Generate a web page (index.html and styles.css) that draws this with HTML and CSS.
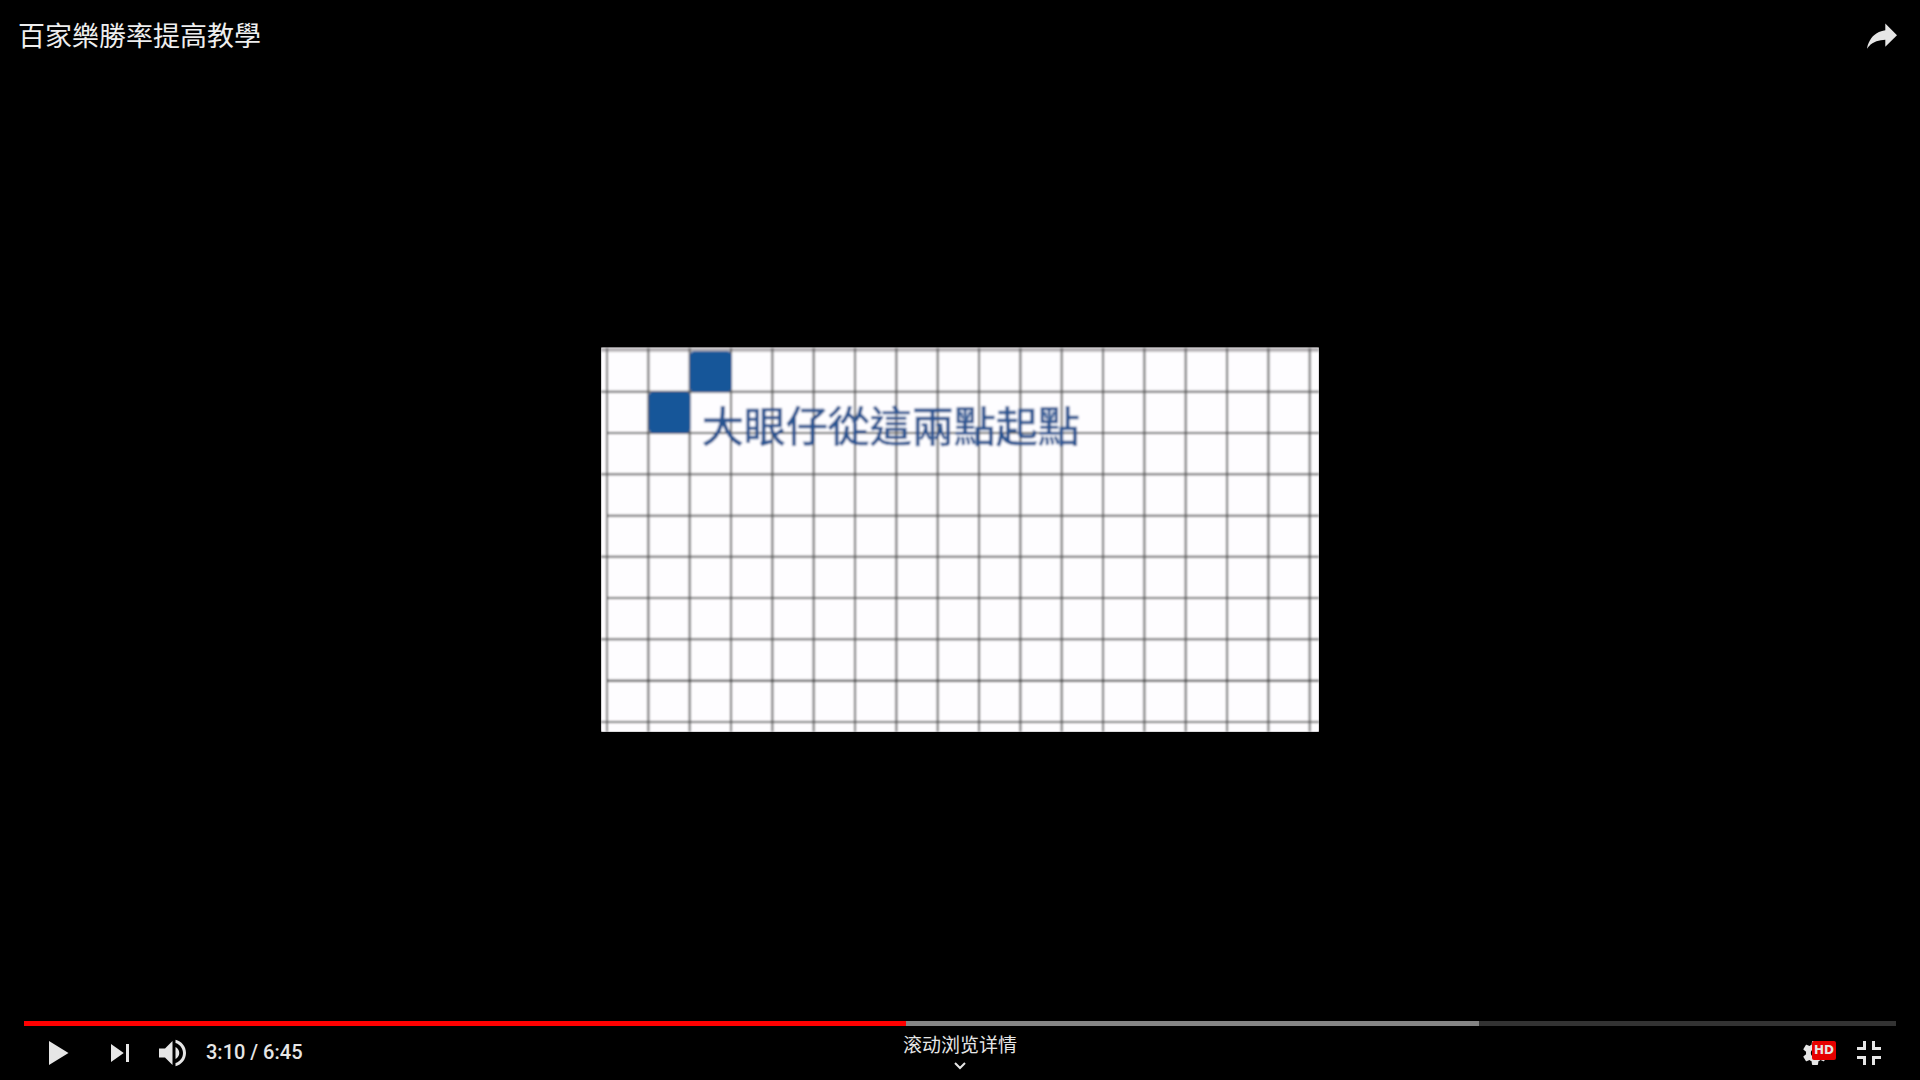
FILE: index.html
```html
<!DOCTYPE html>
<html lang="zh-Hant">
<head>
<meta charset="utf-8">
<meta name="viewport" content="width=device-width, initial-scale=1">
<title>百家樂勝率提高教學</title>
<link rel="stylesheet" href="styles.css">
</head>
<body>
<main class="player">
  <section class="stage">
    <svg class="board" viewBox="0 0 2154 1158" role="img" aria-label="大眼仔從這兩點起點">
      <defs>
        <filter id="soft" x="0" y="0" width="1" height="1">
          <feGaussianBlur stdDeviation="3"/>
        </filter>
      </defs>
      <rect class="paper" x="1" y="2" width="2152" height="1152"/>
      <g filter="url(#soft)">
        <rect class="paper" x="1" y="2" width="2152" height="1152"/>
        <path class="edge" d="M0 8H2154"/>
        <path class="line" d="M18 2V1154M142 2V1154M266 2V1154M390 2V1154M514 2V1154M638 2V1154M762 2V1154M886 2V1154M1010 2V1154M1134 2V1154M1258 2V1154M1382 2V1154M1506 2V1154M1630 2V1154M1754 2V1154M1878 2V1154M2002 2V1154M2126 2V1154"/>
        <path class="line" d="M0 134H2154M18 258H2154M0 382H2154M18 506H2154M0 629H2154M18 753H2154M0 877H2154M0 1125H2154"/>
        <path class="line line-strong" d="M18 1001H2154"/>
        <rect class="mark" x="266" y="13" width="126" height="122" rx="14"/>
        <rect class="mark" x="143" y="134" width="125" height="124" rx="14"/>
        <text class="caption" x="302" y="284">大眼仔從這兩點起點</text>
      </g>
    </svg>
  </section>

  <header class="top-bar">
    <h1 class="title">百家樂勝率提高教學</h1>
    <button class="icon-button" type="button" aria-label="分享">
      <svg class="icon" viewBox="0 0 36 36"><path d="m20.2 14.19 0-4.45 7.79 7.79-7.79 7.56 0-4.56C16.27 20.69 12.1 21.81 9.34 24.76 8.8 25.13 7.6 27.29 8.12 25.65 9.08 21.32 11.8 17.18 15.98 15.38c1.33-.6 2.76-.98 4.21-1.19z"/></svg>
    </button>
  </header>

  <footer class="controls">
    <input class="progress" type="range" min="0" max="405" value="190" aria-label="播放进度">
    <div class="control-row">
      <div class="group">
        <button class="icon-button play" type="button" aria-label="播放">
          <svg class="icon" viewBox="0 0 36 36"><path d="M12 26 25 18 12 10z"/></svg>
        </button>
        <button class="icon-button" type="button" aria-label="下一个">
          <svg class="icon" viewBox="0 0 36 36"><path d="M12 24 20.5 18 12 12zM22 12v12h2V12z"/></svg>
        </button>
        <button class="icon-button" type="button" aria-label="静音">
          <svg class="icon" viewBox="0 0 36 36"><path d="M8 21h4l5 5V10l-5 5H8zM19 14v8c1.48-.68 2.5-2.23 2.5-4s-1.02-3.26-2.5-4zM19 11.29c2.89.86 5 3.54 5 6.71s-2.11 5.85-5 6.71v2.06c4.01-.91 7-4.49 7-8.77s-2.99-7.86-7-8.77z"/></svg>
        </button>
        <span class="time">3:10 / 6:45</span>
      </div>
      <button class="details" type="button" lang="zh-Hans">
        <span>滚动浏览详情</span>
        <svg class="chevron" viewBox="0 0 12 8"><path d="M1 1 6 6 11 1"/></svg>
      </button>
      <div class="group group-end">
        <button class="icon-button settings" type="button" aria-label="设置">
          <svg class="icon" viewBox="0 0 36 36"><path fill-rule="evenodd" d="M23.94 18.78c.03-.25.05-.51.05-.78s-.02-.52-.05-.78l1.68-1.32c.15-.12.19-.33.09-.51l-1.6-2.76c-.09-.17-.31-.24-.48-.17l-1.99.8c-.41-.32-.86-.58-1.35-.78l-.3-2.12c-.02-.19-.19-.33-.39-.33h-3.2c-.2 0-.36.14-.39.33l-.3 2.12c-.48.2-.93.47-1.35.78l-1.99-.8c-.18-.07-.39 0-.48.17l-1.6 2.76c-.1.17-.05.39.09.51l1.68 1.32c-.03.25-.05.52-.05.78s.02.52.05.78l-1.68 1.32c-.15.12-.19.33-.09.51l1.6 2.76c.09.17.31.24.48.17l1.99-.8c.41.32.86.58 1.35.78l.3 2.12c.02.19.19.33.39.33h3.2c.2 0 .36-.14.39-.33l.3-2.12c.48-.2.93-.47 1.35-.78l1.99.8c.18.07.39 0 .48-.17l1.6-2.76c.09-.17.05-.39-.09-.51zM18 20.8c-1.54 0-2.8-1.26-2.8-2.8s1.26-2.8 2.8-2.8 2.8 1.26 2.8 2.8-1.26 2.8-2.8 2.8z"/></svg>
          <span class="badge">HD</span>
        </button>
        <button class="icon-button" type="button" aria-label="退出全屏">
          <svg class="icon" viewBox="0 0 36 36"><path d="M14 14h-4v2h6v-6h-2zM22 14v-4h-2v6h6v-2zM20 26h2v-4h4v-2h-6zM10 22h4v4h2v-6h-6z"/></svg>
        </button>
      </div>
    </div>
  </footer>
</main>
</body>
</html>
```
FILE: styles.css
```css
* {
  box-sizing: border-box;
}

body {
  margin: 0;
  background: #000;
  color: #e6e6e6;
  font-family: Roboto, "Noto Sans CJK TC", sans-serif;
}

/* Stage, title bar and controls share one cell, so the bars lie over the video. */
.player {
  display: grid;
  grid-template: minmax(100vh, auto) / 1fr;
}

.stage,
.top-bar,
.controls {
  grid-area: 1 / 1;
}

.stage {
  display: grid;
  place-items: center;
}

.board {
  width: 37.4%;
}

.paper {
  fill: #fefdff;
}

.line {
  fill: none;
  stroke: #5c5c5c;
  stroke-width: 6;
}

.line-strong {
  stroke: #333;
}

.edge {
  stroke: #b4b0b4;
  stroke-width: 12;
}

.mark {
  fill: #165699;
}

.caption {
  fill: #285390;
  stroke: #285390;
  stroke-width: 2;
  font-family: "Noto Sans CJK TC", sans-serif;
  font-size: 126px;
}

.top-bar {
  align-self: start;
  display: flex;
  justify-content: space-between;
  align-items: center;
  padding: 9px 11px 0 18px;
}

.title {
  margin: 0;
  color: #eee;
  font-size: 27px;
  font-weight: 400;
  line-height: 56px;
}

button {
  padding: 0;
  border: 0;
  background: none;
  color: inherit;
  font: inherit;
  cursor: pointer;
}

.icon-button {
  display: block;
  width: 54px;
  height: 54px;
}

.top-bar .icon-button {
  align-self: flex-start;
}

.icon {
  display: block;
  width: 100%;
  height: 100%;
  fill: #e6e6e6;
}

.controls {
  align-self: end;
  padding: 0 24px;
}

.progress {
  display: block;
  width: 100%;
  height: 5px;
  margin: 0;
  appearance: none;
  background: linear-gradient(to right, #f00 47.1%, #858585 47.1% 77.7%, #333 77.7%);
  cursor: pointer;
}

.progress::-webkit-slider-thumb {
  appearance: none;
  width: 1px;
  height: 5px;
  background: transparent;
}

.control-row {
  display: grid;
  grid-template-columns: 1fr auto 1fr;
  height: 54px;
}

.group {
  display: flex;
  padding-left: 7px;
}

.group-end {
  justify-content: flex-end;
}

.play {
  margin-right: 8px;
}

.time {
  padding-left: 5px;
  font-size: 20px;
  font-weight: 500;
  line-height: 52px;
}

.details {
  display: flex;
  flex-direction: column;
  align-items: center;
  gap: 6px;
  padding-top: 6px;
  font-family: "Noto Sans CJK SC", sans-serif;
  font-size: 19px;
  line-height: 24px;
}

.chevron {
  width: 12px;
  height: 8px;
  fill: none;
  stroke: #e6e6e6;
  stroke-width: 2;
}

.settings {
  position: relative;
}

.badge {
  position: absolute;
  top: 15px;
  left: 24px;
  width: 24px;
  height: 19px;
  border-radius: 2px;
  background: #e60000;
  font-family: "DejaVu Sans", sans-serif;
  font-size: 12px;
  font-weight: 700;
  line-height: 19px;
  text-align: center;
}
```
